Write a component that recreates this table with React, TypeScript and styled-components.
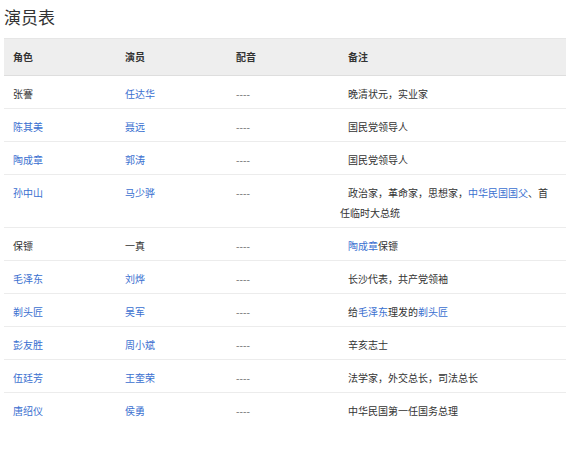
import React from "react";
import styled, { createGlobalStyle } from "styled-components";

const Global = createGlobalStyle`
  html, body { margin: 0; padding: 0; background: #fff; }
  body { font-family: "Noto Sans CJK SC", "Noto Sans", sans-serif; color: #333; }
`;

const Page = styled.div`
  padding: 0 0 0 4px;
`;

const Title = styled.h2`
  margin: 5px 0 9px 0;
  font-size: 17px;
  line-height: 24px;
  font-weight: normal;
  color: #333;
`;

const Table = styled.table`
  width: 562px;
  border-collapse: collapse;
  table-layout: fixed;
  font-size: 10px;
  line-height: 20px;
`;

const Col = styled.col<{ $w: number }>`
  width: ${(p) => p.$w}px;
`;

const Th = styled.th<{ $note?: boolean }>`
  background: #eeeeee;
  border-top: 1px solid #e6e6e6;
  border-bottom: 1px solid #dedede;
  padding: 8px 9px 8px 9px;
  text-align: left;
  font-weight: bold;
  color: #333;
  text-indent: ${(p) => (p.$note ? "8px" : "0")};
`;

const Tr = styled.tr`
  &:not(:last-child) td {
    border-bottom: 1px solid #ececec;
  }
`;

const Td = styled.td<{ $note?: boolean; $dim?: boolean }>`
  padding: 8px 9px 4px 9px;
  vertical-align: top;
  color: ${(p) => (p.$dim ? "#666" : "#333")};
  text-indent: ${(p) => (p.$note ? "8px" : "0")};
  word-break: break-all;
`;

const Link = styled.a`
  color: #3a6fd0;
  text-decoration: none;
`;

type Part = string | { link: string };
type Row = { role: Part; actor: Part; note: Part[] };

const rows: Row[] = [
  { role: "张謇", actor: { link: "任达华" }, note: ["晚清状元，实业家"] },
  { role: { link: "陈其美" }, actor: { link: "聂远" }, note: ["国民党领导人"] },
  { role: { link: "陶成章" }, actor: { link: "郭涛" }, note: ["国民党领导人"] },
  {
    role: { link: "孙中山" },
    actor: { link: "马少骅" },
    note: ["政治家，革命家，思想家，", { link: "中华民国国父" }, "、首任临时大总统"],
  },
  { role: "保镖", actor: "一真", note: [{ link: "陶成章" }, "保镖"] },
  { role: { link: "毛泽东" }, actor: { link: "刘烨" }, note: ["长沙代表，共产党领袖"] },
  {
    role: { link: "剃头匠" },
    actor: { link: "吴军" },
    note: ["给", { link: "毛泽东" }, "理发的", { link: "剃头匠" }],
  },
  { role: { link: "彭友胜" }, actor: { link: "周小斌" }, note: ["辛亥志士"] },
  { role: { link: "伍廷芳" }, actor: { link: "王奎荣" }, note: ["法学家，外交总长，司法总长"] },
  { role: { link: "唐绍仪" }, actor: { link: "侯勇" }, note: ["中华民国第一任国务总理"] },
];

const renderPart = (p: Part, i?: number) =>
  typeof p === "string" ? (
    <React.Fragment key={i}>{p}</React.Fragment>
  ) : (
    <Link key={i} href="#">
      {p.link}
    </Link>
  );

export default function App() {
  return (
    <Page>
      <Global />
      <Title>演员表</Title>
      <Table>
        <colgroup>
          <Col $w={112} />
          <Col $w={111} />
          <Col $w={104} />
          <Col $w={235} />
        </colgroup>
        <thead>
          <tr>
            <Th>角色</Th>
            <Th>演员</Th>
            <Th>配音</Th>
            <Th $note>备注</Th>
          </tr>
        </thead>
        <tbody>
          {rows.map((r, i) => (
            <Tr key={i}>
              <Td>{renderPart(r.role)}</Td>
              <Td>{renderPart(r.actor)}</Td>
              <Td $dim>----</Td>
              <Td $note>{r.note.map((p, j) => renderPart(p, j))}</Td>
            </Tr>
          ))}
        </tbody>
      </Table>
    </Page>
  );
}
